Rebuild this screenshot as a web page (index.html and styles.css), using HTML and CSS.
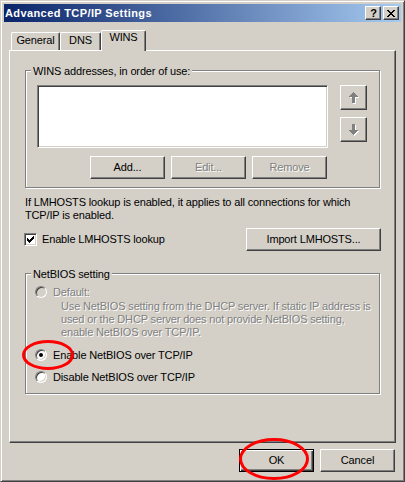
FILE: index.html
```html
<!DOCTYPE html>
<html>
<head>
<meta charset="utf-8">
<title>Advanced TCP/IP Settings</title>
<link rel="stylesheet" href="styles.css">
</head>
<body>
<div class="window">
  <div class="titlebar">
    <span class="title">Advanced TCP/IP Settings</span>
    <div class="cap-btns">
      <span class="cap-btn help">?</span>
      <span class="cap-btn close">
        <svg width="8" height="7" viewBox="0 0 8 7" shape-rendering="crispEdges"><path fill="#000" d="M0 0h2v1H0zM6 0h2v1H6zM1 1h2v1H1zM5 1h2v1H5zM2 2h4v1H2zM3 3h2v1H3zM2 4h4v1H2zM1 5h2v1H1zM5 5h2v1H5zM0 6h2v1H0zM6 6h2v1H6z"/></svg>
      </span>
    </div>
  </div>
  <div class="client">
    <div class="tabs">
      <div class="tab tab-general">General</div>
      <div class="tab tab-dns">DNS</div>
      <div class="tab tab-wins active">WINS</div>
    </div>
    <div class="panel">
      <div class="group wins-group">
        <div class="legend">WINS addresses, in order of use:</div>
        <div class="wins-body">
          <div class="listbox"></div>
          <div class="updown">
            <div class="btn arrow-btn">
              <svg width="10" height="12" viewBox="0 0 10 12" shape-rendering="crispEdges">
                <path fill="#fff" transform="translate(1 1)" d="M4 0h1v1H4zM3 1h3v1H3zM2 2h5v1H2zM1 3h7v1H1zM0 4h9v1H0zM3 5h3v6H3z"/>
                <path fill="#808080" d="M4 0h1v1H4zM3 1h3v1H3zM2 2h5v1H2zM1 3h7v1H1zM0 4h9v1H0zM3 5h3v6H3z"/>
              </svg>
            </div>
            <div class="btn arrow-btn">
              <svg width="10" height="12" viewBox="0 0 10 12" shape-rendering="crispEdges">
                <path fill="#fff" transform="translate(1 1)" d="M3 0h3v6H3zM0 6h9v1H0zM1 7h7v1H1zM2 8h5v1H2zM3 9h3v1H3zM4 10h1v1H4z"/>
                <path fill="#808080" d="M3 0h3v6H3zM0 6h9v1H0zM1 7h7v1H1zM2 8h5v1H2zM3 9h3v1H3zM4 10h1v1H4z"/>
              </svg>
            </div>
          </div>
        </div>
        <div class="btn-row">
          <div class="btn">Add...</div>
          <div class="btn disabled">Edit...</div>
          <div class="btn disabled">Remove</div>
        </div>
      </div>
      <p class="note">If LMHOSTS lookup is enabled, it applies to all connections for which<br>TCP/IP is enabled.</p>
      <div class="lm-row">
        <div class="check">
          <span class="checkbox">
            <svg width="7" height="7" viewBox="0 0 7 7" shape-rendering="crispEdges"><path fill="#000" d="M6 0h1v1H6zM5 1h2v1H5zM0 2h1v1H0zM4 2h3v1H4zM0 3h2v1H0zM3 3h3v1H3zM0 4h5v1H0zM1 5h3v1H1zM2 6h1v1H2z"/></svg>
          </span>
          <span>Enable LMHOSTS lookup</span>
        </div>
        <div class="btn import">Import LMHOSTS...</div>
      </div>
      <div class="group netbios-group">
        <div class="legend">NetBIOS setting</div>
        <div class="radio-row disabled row-default"><span class="radio"></span><span>Default:</span></div>
        <div class="radio-desc">Use NetBIOS setting from the DHCP server. If static IP address is<br>used or the DHCP server does not provide NetBIOS setting,<br>enable NetBIOS over TCP/IP.</div>
        <div class="radio-row row-enable"><span class="radio checked"></span><span>Enable NetBIOS over TCP/IP</span></div>
        <div class="radio-row row-disable"><span class="radio"></span><span>Disable NetBIOS over TCP/IP</span></div>
      </div>
    </div>
    <div class="footer">
      <div class="btn default">OK</div>
      <div class="btn">Cancel</div>
    </div>
  </div>
  <svg class="annotations" width="405" height="482" viewBox="0 0 405 482">
    <ellipse cx="48" cy="355" rx="24.5" ry="13.5" fill="none" stroke="#f00" stroke-width="3"/>
    <ellipse cx="274" cy="459" rx="33.5" ry="19.5" fill="none" stroke="#f00" stroke-width="3"/>
  </svg>
</div>
</body>
</html>
```
FILE: styles.css
```css
body {
  margin: 0;
  background: #d4d0c8;
  font-family: "Liberation Sans", Arial, sans-serif;
  font-size: 11px;
  line-height: 13px;
  letter-spacing: -0.15px;
  color: #000;
}

.window {
  position: relative;
  box-sizing: border-box;
  width: 405px;
  height: 482px;
  border: 1px solid;
  border-color: #d4d0c8 #404040 #404040 #d4d0c8;
  box-shadow: inset 1px 1px 0 #fff, inset -1px -1px 0 #808080;
  padding: 3px;
  background: #d4d0c8;
}

.titlebar {
  display: flex;
  align-items: center;
  height: 18px;
  padding: 0 2px 0 1px;
  background: linear-gradient(to right, #0a246a, #a6caf0);
}

.title {
  flex: 1;
  color: #fff;
  font-weight: bold;
  letter-spacing: 0.4px;
  white-space: nowrap;
}

.cap-btns {
  display: flex;
  gap: 2px;
}

.cap-btn {
  box-sizing: border-box;
  width: 16px;
  height: 14px;
  background: #d4d0c8;
  border: 1px solid;
  border-color: #fff #404040 #404040 #fff;
  box-shadow: inset -1px -1px 0 #808080;
  display: flex;
  align-items: center;
  justify-content: center;
}

.cap-btn.help {
  font-weight: bold;
  font-size: 11px;
  line-height: 12px;
  padding-left: 1px;
}

.cap-btn svg {
  display: block;
}

.client {
  padding: 0 5px;
}

.tabs {
  display: flex;
  align-items: flex-end;
  height: 20px;
  margin-top: 8px;
  padding-left: 2px;
}

.tab {
  box-sizing: border-box;
  height: 18px;
  padding-top: 1px;
  text-align: center;
  border-top: 1px solid #fff;
  border-left: 1px solid #fff;
  border-right: 1px solid #404040;
  border-radius: 2px 2px 0 0;
  box-shadow: inset -1px 0 0 #808080;
  background: #d4d0c8;
}

.tab-general { width: 49px; }
.tab-dns { width: 41px; }

.tab.active {
  position: relative;
  z-index: 1;
  width: 45px;
  height: 21px;
  padding-top: 0;
  margin-bottom: -1px;
}

.panel {
  box-sizing: border-box;
  height: 393px;
  border: 1px solid;
  border-color: #fff #404040 #404040 #fff;
  box-shadow: inset -1px -1px 0 #808080;
  padding: 19px 0 0 15px;
}

.group {
  box-sizing: border-box;
  width: 355px;
  border: 1px solid #808080;
  box-shadow: 1px 1px 0 #fff, inset 1px 1px 0 #fff;
}

.legend {
  width: fit-content;
  margin: -6px 0 0 5px;
  padding: 0 2px;
  background: #d4d0c8;
  white-space: nowrap;
}

.wins-body {
  display: flex;
  margin-top: 7px;
  padding-left: 11px;
}

.listbox {
  box-sizing: border-box;
  width: 291px;
  height: 63px;
  background: #fff;
  border: 1px solid;
  border-color: #808080 #fff #fff #808080;
  box-shadow: inset 1px 1px 0 #404040, inset -1px -1px 0 #d4d0c8;
}

.updown {
  display: flex;
  flex-direction: column;
  gap: 7px;
  margin-left: 12px;
}

.btn {
  box-sizing: border-box;
  width: 75px;
  height: 23px;
  background: #d4d0c8;
  border: 1px solid;
  border-color: #fff #404040 #404040 #fff;
  box-shadow: inset -1px -1px 0 #808080;
  display: flex;
  align-items: center;
  justify-content: center;
  white-space: nowrap;
}

.btn.arrow-btn {
  width: 27px;
  height: 25px;
}

.btn.arrow-btn svg {
  display: block;
}

.btn.disabled {
  color: #808080;
  text-shadow: 1px 1px 0 #fff;
}

.btn.default {
  border-color: #000;
  box-shadow: inset 1px 1px 0 #fff, inset -1px -1px 0 #404040, inset -2px -2px 0 #808080;
}

.btn.import {
  width: 135px;
}

.btn-row {
  display: flex;
  gap: 6px;
  margin-top: 8px;
  padding: 0 0 8px 64px;
}

.note {
  margin: 8px 0 0;
  white-space: nowrap;
}

.lm-row {
  display: flex;
  align-items: center;
  justify-content: space-between;
  width: 356px;
  margin-top: 6px;
}

.check {
  display: flex;
  align-items: center;
  gap: 5px;
  margin-left: -1px;
}

.checkbox {
  box-sizing: border-box;
  width: 13px;
  height: 13px;
  padding: 2px;
  background: #fff;
  border: 1px solid;
  border-color: #808080 #fff #fff #808080;
  box-shadow: inset 1px 1px 0 #404040, inset -1px -1px 0 #d4d0c8;
}

.checkbox svg {
  display: block;
}

.netbios-group {
  margin-top: 22px;
  padding-bottom: 9px;
}

.radio-row {
  display: flex;
  align-items: flex-start;
  gap: 6px;
  padding-left: 9px;
  white-space: nowrap;
}

.row-default { margin-top: 5px; }
.row-enable { margin-top: 10px; }
.row-disable { margin-top: 9px; }

.radio {
  box-sizing: border-box;
  width: 12px;
  height: 12px;
  border-radius: 50%;
  background: #fff;
  border: 1px solid;
  border-color: #808080 #fff #fff #808080;
  box-shadow: inset 1px 1px 0 #404040, inset -1px -1px 0 #d4d0c8;
  display: flex;
  align-items: center;
  justify-content: center;
}

.radio.checked::after {
  content: "";
  width: 4px;
  height: 4px;
  border-radius: 50%;
  background: #000;
}

.radio-row.disabled {
  color: #808080;
  text-shadow: 1px 1px 0 #fff;
}

.radio-row.disabled .radio {
  background: #d4d0c8;
}

.radio-desc {
  margin-top: 1px;
  padding-left: 35px;
  color: #808080;
  text-shadow: 1px 1px 0 #fff;
  white-space: nowrap;
}

.footer {
  display: flex;
  justify-content: flex-end;
  gap: 6px;
  margin-top: 6px;
  padding-right: 1px;
}

.annotations {
  position: absolute;
  left: -1px;
  top: -1px;
  pointer-events: none;
}
```
